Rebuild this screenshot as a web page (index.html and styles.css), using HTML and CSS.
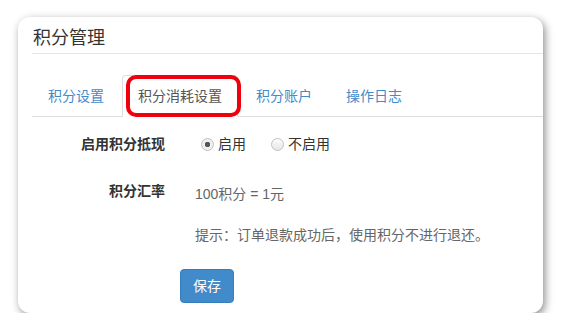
FILE: index.html
```html
<!DOCTYPE html>
<html lang="zh-CN">
<head>
    <meta charset="UTF-8">
    <meta name="viewport" content="width=device-width, initial-scale=1.0">
    <title>积分管理</title>

    <link rel="stylesheet" href="styles.css">
</head>
<body>

    <div class="panel">
        <h3 class="panel-title">积分管理</h3>

        <ul class="nav-tabs">
            <li><a href="#">积分设置</a></li>
            <li class="active"><a href="#">积分消耗设置</a></li>
            <li><a href="#">积分账户</a></li>
            <li><a href="#">操作日志</a></li>
        </ul>

        <span class="mark"></span>

        <form class="form">
            <div class="row row-switch">
                <label class="row-label">启用积分抵现</label>
                <div class="row-control radios">
                    <label class="radio"><input type="radio" name="enable" checked> 启用</label>
                    <label class="radio"><input type="radio" name="enable"> 不启用</label>
                </div>
            </div>

            <div class="row row-rate">
                <label class="row-label">积分汇率</label>
                <div class="row-control">
                    <p class="static">100积分 = 1元</p>
                    <p class="tip">提示：订单退款成功后，使用积分不进行退还。</p>
                </div>
            </div>

            <div class="row row-submit">
                <button type="button" class="btn">保存</button>
            </div>
        </form>
    </div>

</body>
</html>
```

FILE: styles.css
```css
body {
    margin: 0;
    background: #fff;
    font-family: "Liberation Sans", "Noto Sans CJK SC", sans-serif;
    font-size: 14px;
    color: #333;
}

.panel {
    position: relative;
    box-sizing: border-box;
    width: 525px;
    height: 296px;
    margin: 17px 0 0 18px;
    padding: 9px 0 0 14px;
    background: #fff;
    border-radius: 12px;
    box-shadow: 2px 3px 8px rgba(0,0,0,0.45);
}

.panel-title {
    margin: 0;
    padding: 0 0 3px 1px;
    font-size: 18px;
    font-weight: normal;
    line-height: 24px;
    color: #333;
    border-bottom: 1px solid #e5e5e5;
}

.nav-tabs {
    display: flex;
    list-style: none;
    margin: 21px 0 0;
    padding: 0;
    border-bottom: 1px solid #ddd;
}

.nav-tabs li {
    margin-bottom: -1px;
}

.nav-tabs a {
    display: block;
    margin-right: 2px;
    padding: 10px 15px;
    line-height: 20px;
    color: #428bca;
    text-decoration: none;
    border: 1px solid transparent;
    border-radius: 4px 4px 0 0;
}

.nav-tabs .active a {
    color: #555;
    background: #fff;
    border-color: #ddd #ddd transparent;
}

.mark {
    position: absolute;
    left: 108px;
    top: 58px;
    width: 115px;
    height: 42px;
    box-sizing: border-box;
    border: 4px solid #f0000c;
    border-radius: 10px;
}

.form {
    display: flex;
    flex-direction: column;
}

.row {
    display: flex;
    align-items: flex-start;
}

.row-label {
    width: 133px;
    text-align: right;
    font-weight: bold;
    line-height: 20px;
    color: #333;
}

.row-control {
    margin-left: 15px;
}

.row-switch {
    margin-top: 17px;
}

.radios {
    display: flex;
    padding-left: 21px;
    line-height: 20px;
}

.radio {
    display: flex;
    align-items: center;
    margin-right: 25px;
    color: #333;
}

.radio input {
    appearance: none;
    width: 13px;
    height: 13px;
    margin: 0 4px 0 0;
    border: 1px solid #c2c2c2;
    border-radius: 50%;
    background: linear-gradient(#fdfdfd, #e6e6e6);
    box-sizing: border-box;
}

.radio input:checked {
    background: radial-gradient(circle, #555 0, #555 2.5px, #f2f2f2 3px, #e6e6e6 100%);
}

.row-rate {
    margin-top: 27px;
}

.static,
.tip {
    margin: 0;
    padding-left: 15px;
    line-height: 20px;
    color: #666;
}

.static {
    padding-top: 3px;
}

.tip {
    margin-top: 21px;
}

.row-submit {
    margin-top: 24px;
    padding-left: 148px;
}

.btn {
    height: 34px;
    padding: 6px 12px;
    font-family: inherit;
    font-size: 14px;
    line-height: 20px;
    color: #fff;
    background: #428bca;
    border: 1px solid #357ebd;
    border-radius: 4px;
}
```
